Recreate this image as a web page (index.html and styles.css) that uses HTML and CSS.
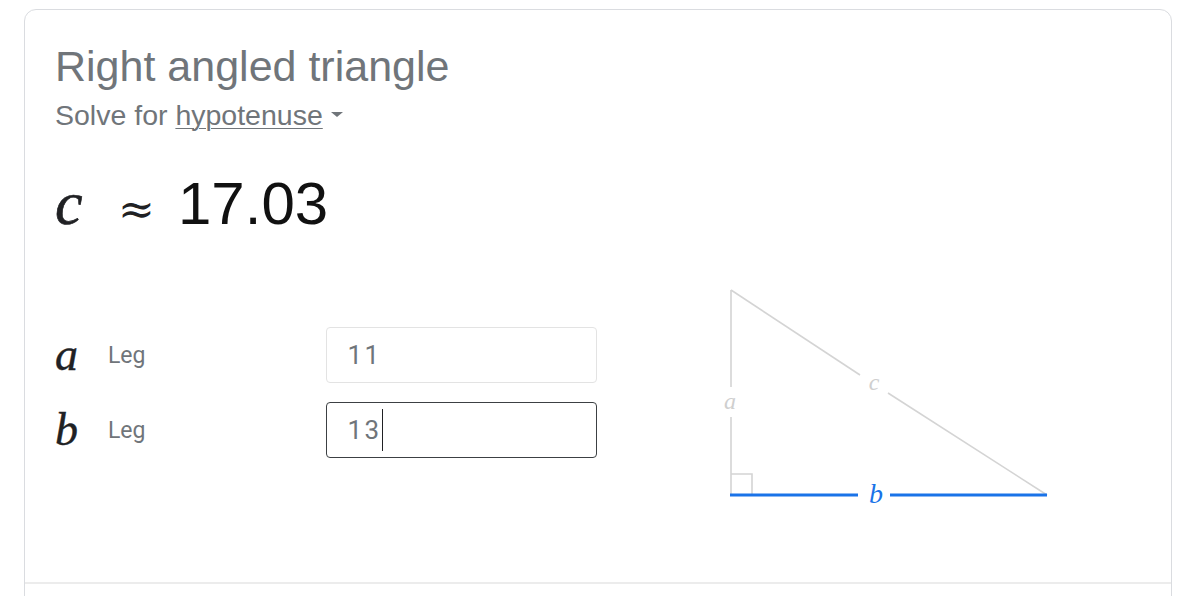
FILE: index.html
```html
<!DOCTYPE html>
<html lang="en">
<head>
<meta charset="utf-8">
<title>Right angled triangle</title>
<link rel="stylesheet" href="styles.css">
</head>
<body>
<div class="card">
  <div class="card-body">
    <h1 class="title">Right angled triangle</h1>
    <div class="subtitle">Solve for <span class="solve-target">hypotenuse</span><span class="caret-down"></span></div>
    <div class="result"><span class="var var-result">c</span><span class="approx">≈</span><span class="value">17.03</span></div>
    <div class="calc-row">
      <div class="fields">
        <div class="field">
          <span class="var var-field">a</span>
          <span class="field-label">Leg</span>
          <div class="input">11</div>
        </div>
        <div class="field">
          <span class="var var-field">b</span>
          <span class="field-label">Leg</span>
          <div class="input input-focused">13<span class="text-caret"></span></div>
        </div>
      </div>
      <svg class="diagram" width="360" height="230" viewBox="0 0 360 230">
        <g stroke="#d4d4d4" stroke-width="1.6" fill="none">
          <line x1="31" y1="10" x2="31" y2="107"/>
          <line x1="31" y1="137" x2="31" y2="215"/>
          <line x1="31" y1="10" x2="160" y2="95"/>
          <line x1="188" y1="113" x2="347" y2="215"/>
          <polyline points="31,194 52,194 52,215"/>
        </g>
        <g stroke="#1a73e8" stroke-width="3">
          <line x1="30" y1="215" x2="158" y2="215"/>
          <line x1="190" y1="215" x2="347" y2="215"/>
        </g>
        <text class="tri-label" x="30" y="129">a</text>
        <text class="tri-label" x="174" y="110">c</text>
        <text class="tri-label tri-label-active" x="176" y="223">b</text>
      </svg>
    </div>
  </div>
  <div class="card-footer"></div>
</div>
</body>
</html>
```

FILE: styles.css
```css
html, body {
  margin: 0;
  padding: 0;
  background: #ffffff;
}

body {
  font-family: "Liberation Sans", Arial, sans-serif;
  color: #202124;
  overflow: hidden;
}

.card {
  margin: 9px 28px 0 24px;
  border: 1px solid #dadce0;
  border-radius: 12px;
  height: 700px;
}

.card-body {
  box-sizing: border-box;
  height: 572px;
  padding: 31px 30px 0 30px;
}

.card-footer {
  border-top: 2px solid #ececec;
}

.title {
  margin: 0;
  font-size: 43px;
  line-height: 50px;
  font-weight: normal;
  color: #70757a;
}

.subtitle {
  margin-top: 6px;
  font-size: 28.5px;
  line-height: 36px;
  color: #70757a;
}

.solve-target {
  text-decoration: underline;
  text-underline-offset: 3px;
  text-decoration-thickness: 1px;
}

.caret-down {
  display: inline-block;
  margin-left: 8px;
  vertical-align: middle;
  border-left: 6px solid transparent;
  border-right: 6px solid transparent;
  border-top: 5px solid #70757a;
  position: relative;
  top: -3px;
}

.result {
  margin-top: 35px;
  height: 70px;
  line-height: 70px;
  display: flex;
  align-items: baseline;
}

.var {
  font-family: "Liberation Serif", "Times New Roman", serif;
  font-style: italic;
  color: #202124;
}

.var-result {
  font-size: 62px;
  width: 63px;
  -webkit-text-stroke: 0.6px #202124;
}

.approx {
  font-family: "DejaVu Serif", "Liberation Serif", serif;
  font-size: 44px;
  width: 60px;
  color: #202124;
}

.value {
  font-size: 60px;
  color: #111111;
}

.calc-row {
  margin-top: 42px;
  display: flex;
  align-items: flex-start;
}

.fields {
  padding-top: 47px;
  width: 542px;
  display: flex;
  flex-direction: column;
  gap: 19px;
}

.field {
  display: flex;
  align-items: center;
  height: 56px;
}

.var-field {
  font-size: 46px;
  width: 53px;
  line-height: 56px;
  -webkit-text-stroke: 0.4px #202124;
}

.field-label {
  font-family: Roboto, "Noto Sans", sans-serif;
  font-size: 23px;
  color: #70757a;
  width: 219px;
}

.input {
  box-sizing: border-box;
  width: 271px;
  height: 56px;
  border: 1px solid #e3e3e3;
  border-radius: 4px;
  padding-left: 20px;
  display: flex;
  align-items: center;
  font-family: Roboto, "Noto Sans", sans-serif;
  font-size: 26px;
  letter-spacing: 2.5px;
  color: #70757a;
}

.input-focused {
  border: 1.5px solid #3c4043;
}

.text-caret {
  display: inline-block;
  width: 0;
  height: 42px;
  border-left: 1px solid #202124;
  margin-left: 0;
}

.diagram {
  margin-left: 103px;
  display: block;
}

.tri-label {
  font-family: "Liberation Serif", "Times New Roman", serif;
  font-style: italic;
  font-size: 24px;
  fill: #cfcfcf;
  text-anchor: middle;
}

.tri-label-active {
  fill: #1a73e8;
  font-size: 28px;
}
```
